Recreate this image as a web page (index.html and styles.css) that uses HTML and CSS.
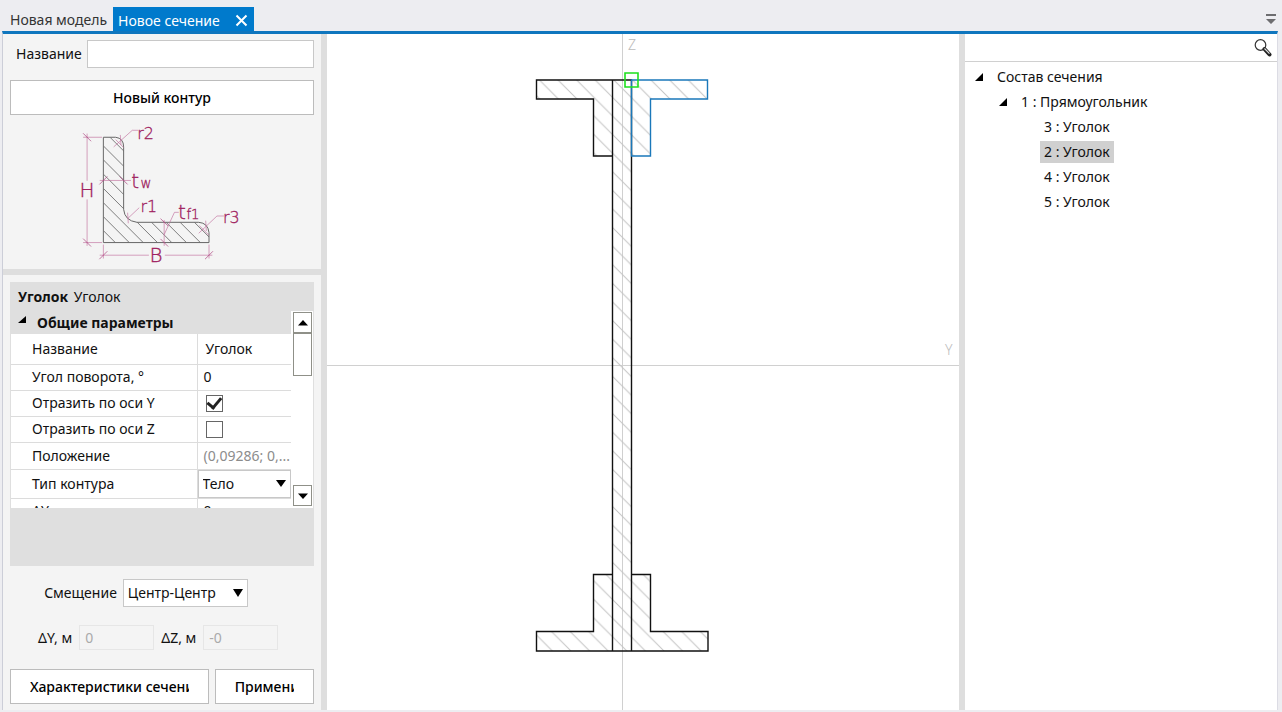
FILE: index.html
```html
<!DOCTYPE html>
<html lang="ru">
<head>
<meta charset="utf-8">
<title>Новое сечение</title>
<link rel="stylesheet" href="styles.css">
</head>
<body>
<div class="app">
  <nav class="tabs">
    <button class="tab" type="button">Новая модель</button>
    <button class="tab tab-active" type="button">Новое сечение
      <svg class="close" width="13" height="13" viewBox="0 0 13 13"><path d="M1.5 1.5 11.500 11.500M11.500 1.500 1.500 11.500" stroke="#fff" stroke-width="2" fill="none"/></svg>
    </button>
    <button class="tabs-menu" type="button" aria-label="Список вкладок">
      <svg width="12" height="12" viewBox="0 0 12 12"><path d="M1 1h10v2H1zM1 6h10L6 11z" fill="#6d6d70"/></svg>
    </button>
  </nav>

  <main class="work">
    <aside class="side">
      <section class="contour">
        <div class="name-row">
          <label for="name">Название</label>
          <input id="name" class="field" type="text">
        </div>
        <button class="btn" type="button">Новый контур</button>
        <svg class="sketch" viewBox="-150 0 915 462">
          <defs>
            <clipPath id="angle"><path d="M131 67H168Q192 70 192 96V284Q195 318 232 323H418Q446 325 449 354V384H131Z"/></clipPath>
          </defs>
          <path clip-path="url(#angle)" class="s-hatch" d="M151 67l60 60M131 93l80 80M131 135l80 80M131 178l80 80M131 221l180 180M131 264l140 140M131 306l100 100M131 348l60 60M276 323l80 80M320 323l80 80M362 323l80 80M405 323l80 80"/>
          <path class="s-edge" d="M131 67H168Q192 70 192 96V284Q195 318 232 323H418Q446 325 449 354V384H131Z"/>
          <path class="s-dim" d="M70 67H127M70 384H127M82 56V198M82 254V394M131 390V432M449 390V432M120 422H268M316 422H459M120 197H214M314 316V394"/>
          <path class="s-dim s-tick" d="M70 55l24 24M70 372l24 24M119 434l24-24M437 434l24-24M119 209l24-24M180 185l24 24M303 312l23 22M303 373l23 23"/>
          <path class="s-dim" d="M236 46H218L162 96M168 74l24 24M182 60l2 30M239 279L205 311M204 294l2 32M358 293H345L314 360M494 304H473L418 356M420 333l29 29M439 318l2 31"/>
          <g class="s-text">
            <text x="59" y="247" class="s-big">H</text>
            <text x="270" y="443" class="s-big">B</text>
            <text x="233" y="71">r2</text>
            <text x="215" y="219" class="s-big">t</text><text x="243" y="219" class="s-small">w</text>
            <text x="243" y="293">r1</text>
            <text x="356" y="313" class="s-big">t</text><text x="381" y="313" class="s-small">f1</text>
            <text x="491" y="326">r3</text>
          </g>
        </svg>
      </section>

      <section class="props">
        <div class="box">
          <header class="box-head"><b>Уголок</b> <span>Уголок</span></header>
          <div class="grid">
            <table class="params">
              <thead>
                <tr><th colspan="2"><svg width="8" height="8" viewBox="0 0 8 8"><path d="M8 0v7H0z"/></svg>Общие параметры</th></tr>
              </thead>
              <tbody>
                <tr class="tall"><td>Название</td><td class="inset">Уголок</td></tr>
                <tr><td>Угол поворота, °</td><td>0</td></tr>
                <tr><td><label for="my">Отразить по оси Y</label></td><td class="inset"><input id="my" class="check" type="checkbox" checked></td></tr>
                <tr><td><label for="mz">Отразить по оси Z</label></td><td class="inset"><input id="mz" class="check" type="checkbox"></td></tr>
                <tr class="pos"><td>Положение</td><td class="muted">(0,09286; 0,...</td></tr>
                <tr class="mid"><td><label for="kind">Тип контура</label></td><td class="edit">
                  <div class="combo"><select id="kind"><option>Тело</option></select><svg width="10" height="8" viewBox="0 0 10 8"><path d="M0 0h10L5 7z"/></svg></div>
                </td></tr>
                <tr><td>ΔY, м</td><td>0</td></tr>
              </tbody>
            </table>
            <div class="scroll">
              <button type="button" aria-label="Вверх"><svg width="10" height="6" viewBox="0 0 10 6"><path d="M0 5.500h10L5 0z"/></svg></button>
              <div class="thumb"></div>
              <button class="down" type="button" aria-label="Вниз"><svg width="10" height="6" viewBox="0 0 10 6"><path d="M0 .5h10L5 6z"/></svg></button>
            </div>
          </div>
        </div>
        <div class="offset">
          <label for="offset">Смещение</label>
          <div class="combo combo-wide"><select id="offset"><option>Центр-Центр</option></select><svg width="10" height="8" viewBox="0 0 10 8"><path d="M0 0h10L5 8z"/></svg></div>
        </div>
        <div class="deltas">
          <label for="dy">ΔY, м</label><input id="dy" type="text" value="0" disabled>
          <label for="dz">ΔZ, м</label><input id="dz" type="text" value="-0" disabled>
        </div>
        <div class="actions">
          <button class="btn btn-clip" type="button"><span>Характеристики сечения</span></button>
          <button class="btn btn-clip" type="button"><span>Применить</span></button>
        </div>
      </section>
    </aside>

    <section class="canvas">
      <svg viewBox="327 34 632 676">
        <defs>
          <pattern id="hatch" x="-80" y="0" width="18.6" height="18.6" patternUnits="userSpaceOnUse">
            <path d="M-1 -1 19.600 19.600M17.600 -1l2 2M-1 17.600l2 2" stroke="#c4c4c4" fill="none"/>
          </pattern>
        </defs>
        <path class="axis" d="M622.500 34V710M327 365.500H960"/>
        <text class="axis-name" x="628" y="50">Z</text>
        <text class="axis-name" x="945" y="355">Y</text>
        <path fill="url(#hatch)" d="M537 80H708V99H651V156H632V574H651V632H708V651H537V632H594V574H613V156H594V99H537Z"/>
        <path class="part" d="M612.500 80H536.500V99H593.500V156H612.500M612.500 574.500H593.500V631.500H536.500V651H708V631.500H650.500V574.500H631.500M612.500 80H631.500V651H612.500Z"/>
        <path class="part part-active" d="M631.500 80H707.500V99H650.500V156H631.500Z"/>
        <path class="grip" d="M625 73h13v14h-13z"/>
      </svg>
    </section>

    <aside class="tree">
      <div class="search">
        <input type="text" aria-label="Поиск">
        <svg width="18" height="18" viewBox="0 0 18 18" fill="none"><circle cx="6.500" cy="6" r="5.300" stroke="#333" stroke-width="1.200"/><path d="M10.500 10l5 5.500" stroke="#222" stroke-width="4" stroke-linecap="round"/><path d="M10.500 9.500l5 5.200" stroke="#ddd" stroke-width="1.200"/></svg>
      </div>
      <ul class="nodes">
        <li><div class="node"><svg width="8" height="8" viewBox="0 0 8 8"><path d="M8 0v8H0z"/></svg><span>Состав сечения</span></div>
          <ul>
            <li><div class="node"><svg width="8" height="8" viewBox="0 0 8 8"><path d="M8 0v8H0z"/></svg><span>1 : Прямоугольник</span></div>
              <ul class="leaves">
                <li class="node"><span>3 : Уголок</span></li>
                <li class="node"><span class="selected">2 : Уголок</span></li>
                <li class="node"><span>4 : Уголок</span></li>
                <li class="node"><span>5 : Уголок</span></li>
              </ul>
            </li>
          </ul>
        </li>
      </ul>
    </aside>
  </main>
</div>
</body>
</html>
```
FILE: styles.css
```css
* { box-sizing: border-box; }
body { margin: 0; }
body, button, input, select {
  font: 14px/20px "Noto Sans", "Open Sans", sans-serif;
  color: #111;
}
button, input, select { margin: 0; padding: 0; border-radius: 0; }
svg { display: block; }

.app {
  height: 100vh;
  display: flex;
  flex-direction: column;
  padding: 0 4px 2px 2px;
  background: #ededf1;
}

/* Tabs */
.tabs { display: flex; align-items: flex-end; height: 31px; padding-left: 2px; flex: none; }
.tab { border: 0; background: none; height: 24px; padding: 1px 6px 0; color: #333; white-space: nowrap; }
.tab-active { display: flex; align-items: center; gap: 15px; background: #007acc; color: #fff; padding: 3px 6px 0 5px; }
.tabs-menu { margin-left: auto; border: 0; background: none; padding: 0 1px 6px 0; }

.work {
  flex: 1;
  min-height: 0;
  display: grid;
  grid-template-columns: 324px 1fr 318px;
  border-top: 3px solid #0f76be;
  border-left: 1px solid #ccced8;
  border-right: 1px solid #dcdce4;
  background: #fff;
}

/* Left panel */
.side { display: flex; flex-direction: column; min-width: 0; border-right: 6px solid #dedede; background: #f4f4f4; }
.contour { padding: 6px 7px 1px 7px; border-bottom: 6px solid #dedede; }
.name-row { display: flex; align-items: center; gap: 5px; padding-left: 6px; margin-bottom: 12px; }
.field { flex: 1; min-width: 0; height: 28px; border: 1px solid #c8c8c8; background: #fff; }
.btn { display: block; width: 100%; height: 35px; border: 1px solid #bcbcbc; background: #fff; font-weight: 500; color: #000; }
.sketch { width: 100%; }
.s-hatch, .s-edge { fill: none; stroke: #666; stroke-width: 3; }
.s-hatch { stroke-width: 2.500; }
.s-dim { fill: none; stroke: #c273a0; stroke-width: 2; }
.s-tick { stroke: #a83a78; }
.s-text { font-family: "DejaVu Sans", sans-serif; font-weight: 200; font-size: 48px; fill: #a01f60; stroke: #a01f60; stroke-width: 1; }
.s-big { font-size: 60px; }
.s-small { font-size: 40px; }

.props { flex: 1; display: flex; flex-direction: column; padding: 7px 7px 6px 7px; }
.box { background: #dfdfdf; padding: 0 0 58px 1px; }
.box-head { height: 29px; padding: 5px 7px 0; }
.box-head b { margin-right: 2px; }
.grid { display: flex; gap: 1px; height: 197px; overflow: hidden; background: #fff; margin-right: 1px; }
.params { flex: 1; min-width: 0; table-layout: fixed; border-collapse: collapse; align-self: flex-start; }
.params th { height: 23px; padding: 0 0 0 7px; text-align: left; background: #dfdfdf; line-height: 20px; }
.params th svg { display: inline-block; margin-right: 11px; vertical-align: 4px; }
.params td { height: 26px; padding: 0 0 0 6px; border-bottom: 1px solid #dcdcdc; white-space: nowrap; line-height: 20px; }
.params td:first-child { width: 186px; padding-left: 21px; border-right: 1px solid #dcdcdc; }
.params .tall td { height: 30px; }
.params .pos td { height: 27px; }
.params .mid td { height: 29px; }
.params .inset { padding-left: 8px; }
.params .edit { padding: 0; }
.params .muted { color: #8c8c8c; }
.check { display: grid; place-items: center; width: 17px; height: 17px; appearance: none; border: 1px solid #666; background: #fff; }
.check:checked::after { content: ""; width: 6px; height: 11px; border: solid #222; border-width: 0 3px 3px 0; transform: rotate(40deg) translate(-1px, -1px); }

.combo { display: grid; align-items: center; border: 1px solid #c8c8c8; background: #fff; }
.combo > * { grid-area: 1 / 1; }
.combo select { appearance: none; width: 100%; height: 26px; padding: 0 4px; border: 0; background: none; }
.combo svg { justify-self: end; margin-right: 4px; pointer-events: none; }
.combo-wide { width: 125px; }

.scroll { display: flex; flex-direction: column; width: 21px; padding: 1px 1px 2px; }
.scroll button { display: grid; place-items: center; height: 21px; border: 1px solid #8f9088; background: #fff; }
.scroll .down { margin-top: auto; }
.thumb { height: 43px; border: 1px solid #8f9088; }

.offset { display: flex; align-items: center; justify-content: center; gap: 6px; margin: 13px 32px 0 0; }
.deltas { display: flex; align-items: center; gap: 7px; padding-left: 28px; margin-top: 18px; }
.deltas input { width: 75px; height: 25px; padding: 0 5px; border: 1px solid #e6e6e6; background: #f4f4f4; color: #aaa; }
.actions { display: grid; grid-template-columns: minmax(0, 2fr) minmax(0, 1fr); gap: 6px; margin-top: auto; }
.btn-clip { padding: 0 19px; }
.btn-clip span { display: block; overflow: hidden; white-space: nowrap; }

/* Drawing */
.canvas { min-width: 0; min-height: 0; overflow: hidden; }
.canvas svg { width: 100%; height: 100%; }
.axis { stroke: #d0d0d0; fill: none; }
.axis-name { font: 300 14px "Noto Sans", sans-serif; fill: #bcbcbc; }
.part { fill: none; stroke: #111; stroke-width: 1.4px; }
.part-active { stroke: #1a78ba; }
.grip { fill: none; stroke: #1ee01e; stroke-width: 1.6px; }

/* Section tree */
.tree { border-left: 6px solid #dedede; background: #fff; }
.search { display: flex; align-items: center; height: 28px; padding-right: 5px; border-bottom: 1px solid #d0d0d0; }
.search input { flex: 1; min-width: 0; border: 0; outline: 0; background: none; }
.nodes, .nodes ul { list-style: none; margin: 0; padding: 0; }
.nodes { padding: 2px 0 0 10px; }
.nodes ul { padding-left: 24px; }
.node { display: flex; align-items: center; gap: 10px; height: 25px; }
.node span { padding: 1px 4px; }
.nodes .leaves { padding-left: 41px; }
.selected { background: #d0d0d0; }
```
